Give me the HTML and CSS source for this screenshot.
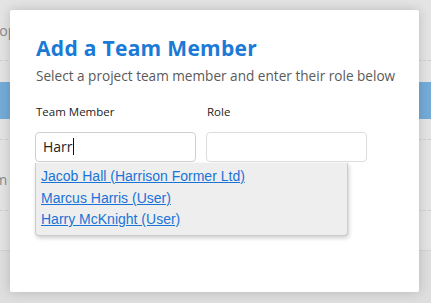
FILE: index.html
```html
<!DOCTYPE html>
<html lang="en">
<head>
    <meta charset="UTF-8">
    <title>Add a Team Member</title>
    <link rel="stylesheet" href="styles.css">
</head>
<body>

    <div class="page">
        <div class="row row-first"><span>Shop</span></div>
        <div class="row row-gap"></div>
        <div class="row row-selected"></div>
        <div class="row row-plain"></div>
        <div class="row row-text"><span>Team</span></div>
        <div class="row row-last"></div>
        <div class="page-foot"></div>
    </div>

    <div class="overlay">
        <div class="modal">
            <h2 class="modal-title">Add a Team Member</h2>
            <p class="modal-sub">Select a project team member and enter their role below</p>

            <div class="fields">
                <div class="field member-field">
                    <label>Team Member</label>
                    <div class="input">Harr<span class="caret"></span></div>
                    <ul class="suggest">
                        <li><a href="#">Jacob Hall (Harrison Former Ltd)</a></li>
                        <li><a href="#">Marcus Harris (User)</a></li>
                        <li><a href="#">Harry McKnight (User)</a></li>
                    </ul>
                </div>
                <div class="field">
                    <label>Role</label>
                    <div class="input"></div>
                </div>
            </div>
        </div>
    </div>

</body>
</html>
```

FILE: styles.css
```css
body{
    margin: 0;
    background: #e4e4e4;
    font-family: "Open Sans", sans-serif;
    position: relative;
    height: 303px;
    overflow: hidden;
}
.page{
    width: 100%;
}
.row{
    border-bottom: 1px dashed #cfcfcf;
    color: #8a8a8a;
    font-size: 14px;
}
.row span{
    display: block;
    margin-left: -17px;
}
.row-first{
    height: 60px;
    line-height: 62px;
}
.row-gap{
    height: 21px;
    border-bottom: none;
}
.row-selected{
    height: 37px;
    background: #74acd8;
    border-bottom: none;
}
.row-plain{
    height: 20px;
}
.row-text{
    height: 70px;
    line-height: 80px;
}
.row-text span{
    margin-left: -29px;
}
.row-last{
    height: 39px;
    border-bottom: 1px solid #d3d3d3;
}
.page-foot{
    height: 60px;
    background: #dedede;
}

.overlay{
    position: absolute;
    inset: 0;
    padding: 10px 12px 11px 10px;
}
.modal{
    background: #fff;
    height: 100%;
    border-radius: 2px;
    box-shadow: 0 0 12px rgba(0,0,0,0.18);
    padding: 24px 20px 24px 26px;
    box-sizing: border-box;
}
.modal-title{
    margin: 0;
    color: #1a7ad6;
    font-size: 21px;
    font-weight: 700;
    letter-spacing: 0.3px;
    line-height: 28px;
}
.modal-sub{
    margin: 4px 0 0;
    color: #5a5a5a;
    font-size: 13.6px;
    line-height: 20px;
    white-space: nowrap;
}
.fields{
    display: flex;
    gap: 10px;
    margin-top: 18px;
    margin-left: -1px;
}
.field{
    position: relative;
    width: 161px;
}
.field label{
    display: block;
    font-size: 11.5px;
    color: #222;
    line-height: 16px;
    margin-bottom: 12px;
    padding-left: 1px;
}
.input{
    height: 28px;
    border: 1px solid #ddd;
    border-radius: 4px;
    font-size: 14px;
    line-height: 28px;
    padding: 0 7px;
    color: #222;
}
.member-field .input{
    border-color: #cfcfcf;
}
.caret{
    display: inline-block;
    width: 1px;
    height: 17px;
    background: #111;
    vertical-align: -3px;
}
.suggest{
    position: absolute;
    left: 0;
    top: 100%;
    margin: 1px 0 0;
    padding: 2px 0 5px;
    list-style: none;
    width: 311px;
    background: #eee;
    border: 1px solid #ccc;
    border-top: none;
    border-radius: 0 0 4px 4px;
    box-shadow: 1px 2px 4px rgba(0,0,0,0.2);
    z-index: 2;
}
.suggest li{
    padding: 0 5px;
    line-height: 20.5px;
}
.suggest a{
    font-family: "Liberation Sans", Arial, sans-serif;
    font-size: 14px;
    color: #1a73d6;
}
```
